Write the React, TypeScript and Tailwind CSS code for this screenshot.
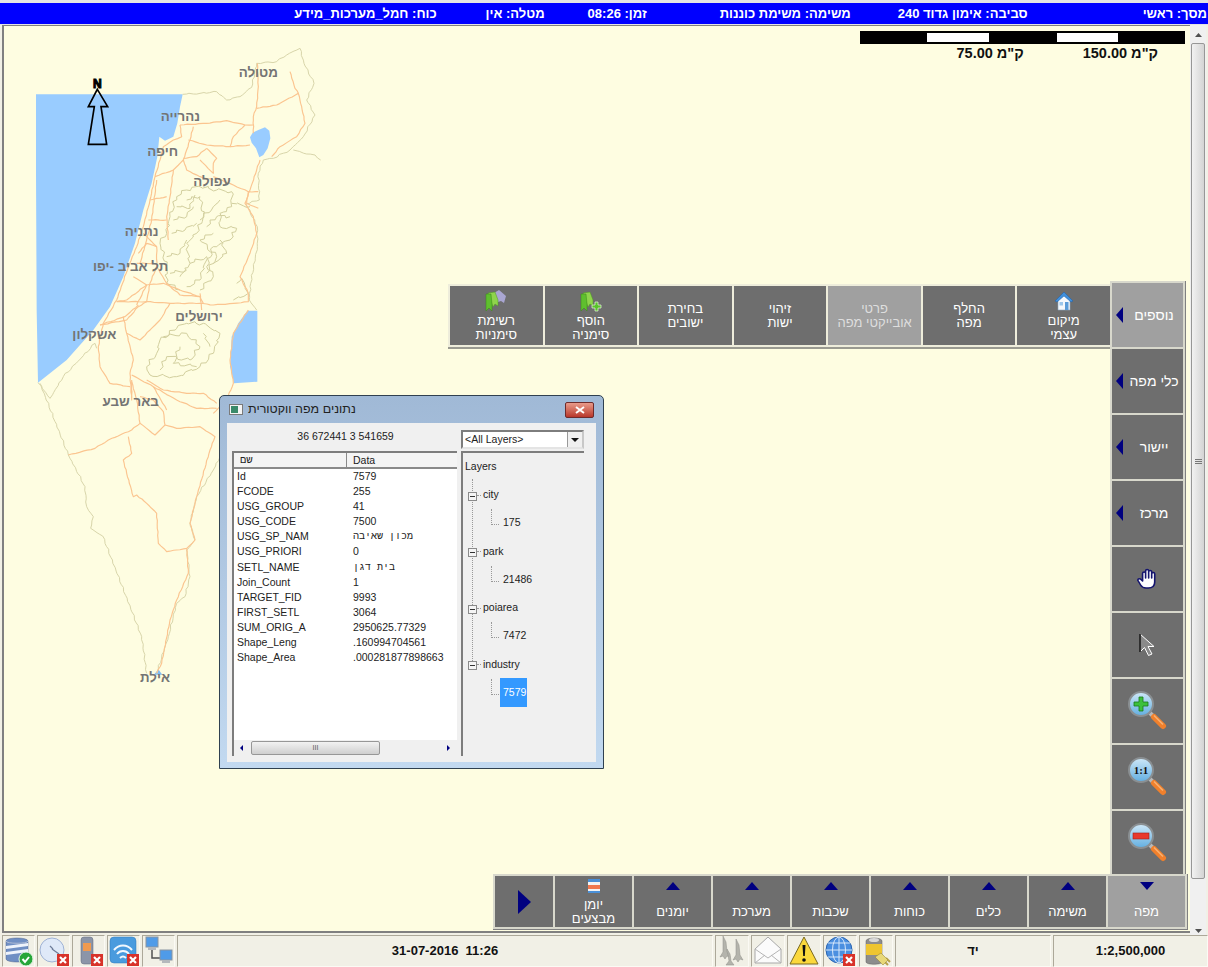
import React from "react";

type Pts = number[][];

// map geometry is in 3x page coordinates, the svg below scales it back down
const sea: Pts = [[108,283],[548,283],[540,320],[532,370],[520,410],[495,422],[478,410],[472,470],[455,550],[430,630],[405,730],[370,830],[330,920],[280,990],[200,1080],[114,1148],[110,930],[108,520]];
const deadSea: Pts = [[742,932],[772,932],[772,1145],[702,1150],[690,1100],[695,1010],[715,970]];
const kinneret: Pts = [[750,412],[758,398],[775,390],[795,382],[808,392],[811,415],[803,445],[790,465],[778,472],[768,445],[755,428]];
const eilat: Pts = [[475,2008],[487,2024],[462,2024]];

const roads: Pts[] = [
  [[540,375],[620,370],[680,362],[735,375],[760,375]],
  [[772,190],[775,260],[770,320],[760,350],[760,400]],
  [[770,325],[830,315],[895,280],[905,320],[915,370],[890,410],[840,440],[815,470]],
  [[870,215],[885,265],[895,280]],
  [[540,375],[545,410],[520,420],[490,440],[480,480],[465,530],[450,600],[430,680],[410,740],[385,800],[350,900],[310,970],[295,1040],[300,1100],[330,1150],[390,1160]],
  [[580,380],[570,420],[550,480],[560,510],[600,530],[640,540]],
  [[735,375],[700,410],[690,440],[620,435],[565,420]],
  [[690,440],[750,435]],
  [[620,445],[590,470],[550,475]],
  [[620,445],[650,475],[640,490],[640,520],[600,480]],
  [[780,480],[770,510],[750,570],[735,610],[760,650],[770,700],[750,760],[720,830],[745,880],[745,905],[700,910],[640,915],[600,910],[510,910],[440,905],[350,905]],
  [[640,530],[700,555],[745,575],[775,575]],
  [[465,530],[520,510],[550,480]],
  [[520,510],[510,590],[500,650],[505,720]],
  [[450,600],[500,590]],
  [[445,660],[500,660]],
  [[470,540],[455,660],[440,720],[420,790]],
  [[430,700],[470,740],[470,800],[450,850],[440,905],[415,920],[380,960],[300,975]],
  [[400,830],[440,855],[490,850],[540,870],[600,890],[610,910]],
  [[410,790],[460,790]],
  [[440,855],[380,900],[350,905]],
  [[300,975],[375,950],[415,915]],
  [[470,740],[440,730],[415,760]],
  [[470,800],[500,850],[540,885],[600,890]],
  [[440,855],[410,915]],
  [[745,575],[740,610],[775,625]],
  [[510,910],[480,960],[420,1020],[380,1000],[370,950]],
  [[380,1000],[400,1080],[390,1120],[395,1200],[395,1140]],
  [[600,880],[605,930]],
  [[745,930],[700,1000],[690,1080],[700,1150],[680,1200],[640,1240]],
  [[395,1125],[460,1160],[530,1200],[590,1225],[650,1225]],
  [[395,1145],[410,1200],[420,1270],[395,1290],[325,1320],[285,1345],[205,1365]],
  [[420,1270],[465,1305],[495,1275],[490,1235],[460,1200],[420,1190]],
  [[440,1140],[490,1170],[560,1180],[610,1180],[650,1210]],
  [[460,1160],[500,1230]],
  [[495,1275],[530,1285],[600,1280],[645,1310],[630,1350],[590,1490],[570,1570],[585,1620],[560,1645],[500,1655],[475,1630],[470,1540],[440,1510],[410,1485],[400,1490],[380,1420],[370,1380],[395,1360],[385,1310]],
  [[560,1645],[565,1720],[530,1800],[510,1860],[485,1990],[470,2020]],
];

const borders: Pts[] = [
  [[548,283],[600,280],[650,275],[680,300],[720,290],[755,262],[770,190],[830,185],[860,165],[900,145],[912,190],[942,250],[920,300],[945,345],[910,410],[870,450],[820,475],[790,480]],
  [[880,450],[920,462],[945,465],[962,480]],
  [[790,480],[775,520],[778,600],[738,612],[772,680],[772,740],[752,850],[748,900],[770,930]],
  [[114,1148],[150,1195],[190,1130],[285,1030],[290,1045]],
  [[120,1150],[205,1365],[255,1460],[260,1520],[280,1550],[272,1585],[308,1608],[425,1910],[440,2020]],
  [[470,2020],[505,1910],[530,1810],[555,1790],[570,1730],[560,1650],[585,1620],[570,1570],[590,1490],[640,1410],[660,1370]],
];

const westBank: Pts[] = [
  [[530,590],[560,570],[600,560],[650,570],[695,575],[695,620],[660,640],[660,680],[710,685],[690,720],[640,740],[620,800],[640,830],[600,870]],
  [[530,590],[510,650],[500,700],[480,730],[500,800],[500,850],[540,870]],
  [[560,600],[600,590],[610,650],[590,700],[560,730],[570,790],[540,830]],
  [[520,660],[560,650],[580,620]],
  [[600,660],[640,620],[660,600]],
  [[640,700],[600,720],[650,770],[620,820]],
  [[500,770],[540,760],[560,720]],
  [[515,700],[555,690],[590,670]],
  [[620,680],[650,650],[690,650]],
  [[530,620],[570,625],[585,585]],
  [[570,790],[620,770],[600,840],[560,860]],
  [[510,820],[560,810]],
  [[660,720],[680,760],[640,790]],
  [[695,610],[750,620]],
  [[710,850],[725,835],[745,880],[700,900]],
  [[530,985],[480,1020],[470,1060],[440,1100],[450,1125],[530,1130],[600,1100],[640,1060],[660,1000],[610,970],[560,970],[530,985]],
  [[490,1010],[560,1000],[600,1040],[570,1080],[500,1070],[480,1110]],
  [[540,1040],[520,1090],[590,1100]],
  [[610,1000],[630,1040]],
];

const toPoints = (pts: Pts) => pts.map((p) => p.join(",")).join(" ");

// breaks a line up into small jitters so it reads like a surveyed border
function wiggle(pts: Pts, amp: number) {
  let d = `M${pts[0][0]} ${pts[0][1]}`;
  let k = 1;
  for (let i = 1; i < pts.length; i++) {
    const [x0, y0] = pts[i - 1];
    const [x1, y1] = pts[i];
    const n = Math.max(1, Math.round(Math.hypot(x1 - x0, y1 - y0) / 11));
    for (let j = 1; j <= n; j++) {
      const t = j / n;
      const off = j === n ? 0 : amp;
      const x = x0 + (x1 - x0) * t + Math.sin(k * 2.3) * off;
      const y = y0 + (y1 - y0) * t + Math.cos(k * 1.7) * off;
      d += ` L${x.toFixed(1)} ${y.toFixed(1)}`;
      k++;
    }
  }
  return d;
}

const cities = [
  { name: "מטולה", x: 775, y: 232 },
  { name: "נהרייה", x: 541, y: 362 },
  { name: "חיפה", x: 488, y: 467 },
  { name: "עפולה", x: 636, y: 557 },
  { name: "נתניה", x: 425, y: 707 },
  { name: "תל אביב -יפו", x: 392, y: 814 },
  { name: "ירושלים", x: 597, y: 962 },
  { name: "אשקלון", x: 283, y: 1017 },
  { name: "באר שבע", x: 392, y: 1219 },
  { name: "אילת", x: 465, y: 2045 },
];

function MapLayer() {
  return (
    <svg viewBox="0 0 1200 2100" className="absolute left-[-4px] top-[-26px] w-[400px] h-[700px]">
      <polygon points={toPoints(sea)} fill="#99ccff" />
      <polygon points={toPoints(deadSea)} fill="#99ccff" />
      <polygon points={toPoints(kinneret)} fill="#99ccff" />
      <polygon points={toPoints(eilat)} fill="#7fbcf5" />
      <g fill="none" stroke="#d8d5aa" strokeWidth="3" strokeLinejoin="round">
        {borders.map((b, i) => (
          <path key={i} d={wiggle(b, 2)} />
        ))}
        {westBank.map((b, i) => (
          <path key={i} d={wiggle(b, 5)} stroke="#d2cf9e" />
        ))}
      </g>
      <g fill="none" stroke="#fbc590" strokeWidth="3.500" strokeLinejoin="round">
        {roads.map((r, i) => (
          <path key={i} d={wiggle(r, 1)} />
        ))}
      </g>
      <g fill="#747474" fontWeight="700" fontSize="40" textAnchor="middle" fontFamily="'Liberation Sans', sans-serif">
        {cities.map((c) => (
          <text key={c.name} x={c.x} y={c.y} direction="rtl">
            {c.name}
          </text>
        ))}
      </g>
      <polygon
        points="292,268 323,320 303,320 320,433 265,433 283,320 265,320"
        fill="none"
        stroke="#000"
        strokeWidth="5"
      />
      <text x="292" y="263" textAnchor="middle" fontSize="36" fontWeight="700" stroke="#000" strokeWidth="3" fontFamily="'Liberation Sans', sans-serif">
        N
      </text>
    </svg>
  );
}

function Triangle({ dir, className }: { dir: "up" | "down" | "left" | "right"; className: string }) {
  const pts = {
    up: "5,0 10,8 0,8",
    down: "0,0 10,0 5,8",
    left: "8,0 8,10 0,5",
    right: "0,0 8,5 0,10",
  }[dir];
  const box = dir === "up" || dir === "down" ? "0 0 10 8" : "0 0 8 10";
  return (
    <svg viewBox={box} preserveAspectRatio="none" className={className}>
      <polygon points={pts} fill="#000080" />
    </svg>
  );
}

function HouseIcon() {
  return (
    <svg viewBox="0 0 20 20" className="w-[20px] h-[20px]">
      <path d="M4 9v10h12V9L10 4z" fill="#f4f8fc" stroke="#8aa4c0" strokeWidth=".6" />
      <rect x="11" y="11" width="3.500" height="8" fill="#5a9bd8" />
      <rect x="5.500" y="11" width="3.500" height="3.500" fill="#9cc6ea" />
      <path d="M1 10 10 1l9 9-2 1-7-6-7 6z" fill="#3f8fdc" stroke="#1f5fa8" strokeWidth=".5" />
    </svg>
  );
}

function BookmarkIcon({ plus }: { plus?: boolean }) {
  return (
    <svg viewBox="0 0 24 22" className="w-[24px] h-[22px]">
      {!plus && <path d="M10 3l5-3 7 6-2 7-3-2-3 1z" fill="#a9a6d2" />}
      <path d="M4 3l7-1 3 8v6l-3-2-2 3z" fill="#8fd44c" stroke="#4f9a22" strokeWidth=".5" />
      <path d="M2 4l5 0 1 10v7l-3-3-3 3z" fill="#5fbf2e" stroke="#3a8a18" strokeWidth=".5" />
      {plus && <path d="M13 15h3v-3h3v3h3v3h-3v3h-3v-3h-3z" fill="#59c22c" stroke="#e8f8d8" strokeWidth=".7" />}
    </svg>
  );
}

function Magnifier({ children }: { children: React.ReactNode }) {
  return (
    <svg viewBox="0 0 40 40" className="w-[40px] h-[40px] mb-[2px] mr-[1px]">
      <defs>
        <linearGradient id="glass" x1="0" y1="0" x2="0" y2="1">
          <stop offset="0" stopColor="#cfe8f8" />
          <stop offset="1" stopColor="#62aee0" />
        </linearGradient>
      </defs>
      <path d="M23 23l4 4" stroke="#b8b8b8" strokeWidth="4" />
      <path d="M27 27l9 9" stroke="#f0802c" strokeWidth="6" strokeLinecap="round" />
      <path d="M27 25.500l9 9" stroke="#f9b070" strokeWidth="1.500" />
      <circle cx="14" cy="14" r="12" fill="url(#glass)" stroke="#8a8f92" strokeWidth="2" />
      {children}
    </svg>
  );
}

function XBadge({ x = 18, y = 18 }: { x?: number; y?: number }) {
  return (
    <g transform={`translate(${x} ${y})`}>
      <rect width="12" height="12" fill="#d8322a" />
      <path d="M3 3l6 6M9 3l-6 6" stroke="#fff" strokeWidth="2.200" />
    </g>
  );
}

const iconClass = "w-[30px] h-[30px]";

const statusLeftIcons = [
  <svg viewBox="0 0 30 30" className={iconClass} key="db">
    <path d="M2 5c0-4 22-4 22 0v18c0 4-22 4-22 0z" fill="#6f8fc4" stroke="#51648c" strokeWidth=".5" />
    <path d="M2 10l22-3v3L2 13zM2 16l22-3v3L2 19z" fill="#eef3fb" />
    <path d="M2 5c0 3 22 3 22 0" fill="none" stroke="#b0bcd4" />
    <circle cx="22" cy="23" r="7" fill="#27a63a" stroke="#e8f4e8" />
    <path d="M18.500 23l2.500 3 4-5" fill="none" stroke="#fff" strokeWidth="2" />
  </svg>,
  <svg viewBox="0 0 30 30" className={iconClass} key="dish">
    <circle cx="13" cy="14" r="12" fill="#dfe9f8" stroke="#9fb2d4" />
    <path d="M13 13l7 5M11 10l3 3" stroke="#6d7c99" strokeWidth="1.200" />
    <XBadge />
  </svg>,
  <svg viewBox="0 0 30 30" className={iconClass} key="phone">
    <rect x="7" y="1" width="12" height="27" rx="3" fill="#8c95a8" stroke="#5e6678" strokeWidth=".5" />
    <rect x="9" y="7" width="8" height="8" fill="#f09a50" />
    <XBadge x={17} />
  </svg>,
  <svg viewBox="0 0 30 30" className={iconClass} key="wifi">
    <rect x="1" y="1" width="26" height="26" rx="4" fill="#4a9bde" stroke="#2e78ba" strokeWidth=".5" />
    <path d="M5 14c5-6 13-6 18 0M8 18c3-4 9-4 12 0M11 22c2-2 4-2 6 0" fill="none" stroke="#f2f8fe" strokeWidth="2" />
    <XBadge />
  </svg>,
  <svg viewBox="0 0 30 30" className={iconClass} key="network">
    <path d="M8 14v8h10" fill="none" stroke="#505050" strokeWidth="1.500" />
    <rect x="2" y="1" width="12" height="10" fill="#4f9be8" stroke="#8a94a0" />
    <rect x="4" y="11" width="8" height="3" fill="#b4b8bc" />
    <rect x="16" y="14" width="12" height="10" fill="#4f9be8" stroke="#8a94a0" />
    <rect x="18" y="24" width="8" height="3" fill="#b4b8bc" />
  </svg>,
];

const statusRightIcons = [
  <svg viewBox="0 0 30 30" className={iconClass} key="jets">
    <g fill="#b4b4ac" stroke="#8f8f88" strokeWidth=".5">
      <path d="M6 0l3 6 1 10 3 5-3-1-2 3-2-3-3 1 3-5z" />
      <path d="M19 3l3 6 1 10 3 5-3-1-2 3-2-3-3 1 3-5z" />
      <path d="M10 13l3 5 1 7 3 4-8 0 3-4z" />
    </g>
  </svg>,
  <svg viewBox="0 0 30 30" className={iconClass} key="mail">
    <path d="M2 13L15 1l13 12v14H2z" fill="#fbfbfb" stroke="#a8a8a8" />
    <path d="M2 13l13 9 13-9M2 27l10-8M28 27l-10-8" fill="none" stroke="#b4b4b4" />
  </svg>,
  <svg viewBox="0 0 30 30" className={iconClass} key="warning">
    <path d="M15 1L29 28H1z" fill="#fbd83c" stroke="#7a6a20" strokeLinejoin="round" />
    <path d="M13.500 9h3l-.7 11h-1.600z" fill="#111" />
    <circle cx="15" cy="24" r="1.800" fill="#111" />
  </svg>,
  <svg viewBox="0 0 30 30" className={iconClass} key="globe">
    <circle cx="14" cy="14" r="13" fill="#4b8fe0" stroke="#2a64b0" />
    <path d="M1 14h26M3 7h22M3 21h22M14 1v26" stroke="#d8e8fa" fill="none" />
    <ellipse cx="14" cy="14" rx="6.500" ry="13" fill="none" stroke="#d8e8fa" />
    <XBadge />
  </svg>,
  <svg viewBox="0 0 30 30" className={iconClass} key="battery">
    <path d="M5 5c0-4 16-4 16 0v21c0 3-16 3-16 0z" fill="#8d8d8d" stroke="#5c5c5c" strokeWidth=".5" />
    <rect x="5" y="8" width="16" height="11" fill="#eec530" />
    <ellipse cx="13" cy="4" rx="5" ry="2" fill="#d8d8d8" />
    <path d="M22 24l5 5M25 22l4 4" stroke="#b9a24a" strokeWidth="2" />
    <path d="M14 21l6-4 7 7-5 5z" fill="#e8d878" stroke="#8a7a2a" strokeWidth=".5" />
  </svg>,
];

const topButtons = [
  { lines: ["רשימת", "סימניות"], icon: <BookmarkIcon /> },
  { lines: ["הוסף", "סימניה"], icon: <BookmarkIcon plus /> },
  { lines: ["בחירת", "ישובים"] },
  { lines: ["זיהוי", "ישות"] },
  { lines: ["פרטי", "אובייקטי מפה"], active: true },
  { lines: ["החלף", "מפה"] },
  { lines: ["מיקום", "עצמי"], icon: <HouseIcon /> },
];

function TopToolbar() {
  return (
    <div className="absolute left-[444px] top-[258px] w-[664px] p-[2px] bg-[#eeeddb] border-b-2 border-b-[#9a9a90]">
      <div className="grid grid-cols-7 gap-[2px]">
        {topButtons.map((b) => (
          <div
            key={b.lines.join()}
            className={`h-[59px] flex flex-col items-center text-[13px] leading-[14px] pt-[1px] ${b.icon ? "justify-start" : "justify-center"} ${
              b.active ? "bg-[#a0a0a0] text-[#dedede]" : "bg-[#6e6e6e] text-white"
            }`}
          >
            {b.icon && <div className="h-[27px] flex items-center">{b.icon}</div>}
            {b.lines.map((l) => (
              <div key={l}>{l}</div>
            ))}
          </div>
        ))}
      </div>
    </div>
  );
}

const sideLabels = [
  { label: "נוספים", active: true },
  { label: "כלי מפה" },
  { label: "יישור" },
  { label: "מרכז" },
];

function SideToolbar() {
  const tool = "h-[64px] bg-[#6e6e6e] flex items-center justify-center";
  return (
    <div className="absolute right-[4px] top-[255px] w-[76px] p-[2px] bg-[#d8d8cc] border-r border-[#808080] flex flex-col gap-[2px]">
      {sideLabels.map((s) => (
        <div key={s.label} className={`h-[64px] flex items-center pl-[4px] text-[14px] text-white ${s.active ? "bg-[#a0a0a0]" : "bg-[#6e6e6e]"}`}>
          <Triangle dir="left" className="w-[7px] h-[16px] shrink-0" />
          <div className="flex-1 text-center whitespace-nowrap pl-[2px]">{s.label}</div>
        </div>
      ))}
      <div className={tool}>
        <svg viewBox="0 0 24 24" preserveAspectRatio="none" className="w-[26px] h-[24px]">
          <path
            d="M3 14c-1-1 0-3 2-2l2 2V6.500a1.400 1.400 0 0 1 2.800 0V11V4a1.400 1.400 0 0 1 2.800 0v7V4.800a1.400 1.400 0 0 1 2.800 0V11V7a1.400 1.400 0 0 1 2.800 0v8c0 4-2 6-6 6h-2c-3 0-4-1-5-3z"
            fill="#fff"
            stroke="#14146e"
            strokeWidth="1.500"
            strokeLinejoin="round"
          />
        </svg>
      </div>
      <div className={tool}>
        <svg viewBox="0 0 17 24" className="w-[17px] h-[24px] mr-[1px]">
          <path d="M1 1v18l4.500-4.500 4 8 3.500-1.500-4-7.500H15z" fill="#8a8a8a" stroke="#fff" strokeWidth="1" />
          <path d="M1 1v18" stroke="#000" strokeWidth="1.500" />
        </svg>
      </div>
      <div className={tool}>
        <Magnifier>
          <path d="M12 7h4v5h5v4h-5v5h-4v-5H7v-4h5z" fill="#3cc03c" stroke="#1a7a1a" strokeWidth=".8" />
        </Magnifier>
      </div>
      <div className={tool}>
        <Magnifier>
          <text x="14" y="18" textAnchor="middle" fontSize="11" fontWeight="700" fill="#111" fontFamily="'Liberation Serif', serif">
            1:1
          </text>
        </Magnifier>
      </div>
      <div className={`${tool} h-[60px]`}>
        <Magnifier>
          <rect x="6" y="11" width="16" height="6" fill="#e8382c" stroke="#a02018" strokeWidth=".6" />
        </Magnifier>
      </div>
    </div>
  );
}

const bottomButtons = ["יומנים", "מערכת", "שכבות", "כוחות", "כלים", "משימה"];

function BottomToolbar() {
  return (
    <div className="absolute right-[2px] bottom-[1px] h-[56px] p-[2px] bg-[#d8d8cc] border-r border-b border-[#808080] flex gap-[2px]">
      <div className="w-[58px] bg-[#6e6e6e] flex items-center justify-center">
        <Triangle dir="right" className="w-[13px] h-[24px]" />
      </div>
      <div className="w-[77px] bg-[#6e6e6e] flex flex-col items-center text-white text-[13px] leading-[14px] pt-[3px]">
        <svg viewBox="0 0 12 14" className="w-[12px] h-[14px] mb-[5px]">
          <rect width="12" height="14" fill="#4a90d8" />
          <rect y="3" width="12" height="3" fill="#f4f4f4" />
          <rect y="6" width="12" height="4" fill="#f07850" />
          <rect y="10" width="12" height="2" fill="#f4f4f4" />
        </svg>
        <div>יומן</div>
        <div>מבצעים</div>
      </div>
      {bottomButtons.map((b) => (
        <div key={b} className="w-[77px] bg-[#6e6e6e] flex flex-col items-center text-white text-[13px] pt-[6px]">
          <Triangle dir="up" className="w-[14px] h-[8px] mb-[15px]" />
          <div className="leading-[14px]">{b}</div>
        </div>
      ))}
      <div className="w-[77px] bg-[#a0a0a0] flex flex-col items-center text-white text-[13px] pt-[6px]">
        <Triangle dir="down" className="w-[14px] h-[8px] mb-[15px]" />
        <div className="leading-[14px]">מפה</div>
      </div>
    </div>
  );
}

const rows = [
  ["Id", "7579"],
  ["FCODE", "255"],
  ["USG_GROUP", "41"],
  ["USG_CODE", "7500"],
  ["USG_SP_NAM", "מכון שאיבה", "he"],
  ["USG_PRIORI", "0"],
  ["SETL_NAME", "בית דגן", "he"],
  ["Join_Count", "1"],
  ["TARGET_FID", "9993"],
  ["FIRST_SETL", "3064"],
  ["SUM_ORIG_A", "2950625.77329"],
  ["Shape_Leng", ".160994704561"],
  ["Shape_Area", ".000281877898663"],
];

const layers = [
  { name: "city", id: "175" },
  { name: "park", id: "21486" },
  { name: "poiarea", id: "7472" },
  { name: "industry", id: "7579", selected: true },
];

function LayerTree() {
  return (
    <div className="relative flex-1 border-t-2 border-l-2 border-[#7d7d7d] bg-[#f0f0f0] pl-[2px]">
      <div className="pt-[6px] h-[27px] leading-[14px]">Layers</div>
      <div className="absolute left-[9px] top-[26px] h-[186px] border-l border-dotted border-[#999]" />
      {layers.map((l) => (
        <div key={l.name} className="relative h-[56.500px] pt-[8px]">
          <div className="flex items-center h-[14px] pl-[3px]">
            <div className="relative w-[9px] h-[9px] border border-[#8a8a8a] bg-[#f4f4f4] mt-[2px]">
              <div className="absolute left-[1px] right-[1px] top-[3px] h-px bg-[#333]" />
            </div>
            <div className="w-[4px] border-t border-dotted border-[#999] mr-[2px]" />
            <div>{l.name}</div>
          </div>
          <div className="absolute left-[26px] top-[29px] w-[8px] h-[16px] border-l border-b border-dotted border-[#999]" />
          <div
            className={`absolute left-[35px] flex items-center px-[3px] ${
              l.selected ? "top-[28.500px] h-[29px] w-[27px] bg-[#3399ff] text-white" : "top-[35.500px] h-[15px]"
            }`}
          >
            {l.id}
          </div>
        </div>
      ))}
    </div>
  );
}

function DataDialog() {
  return (
    <div className="absolute left-[215px] top-[369px] w-[385px] h-[374px] rounded-t-[5px] border border-[#2f4050] bg-gradient-to-b from-[#a0b9d6] to-[#c2d9f0] px-[7px] pb-[6px] flex flex-col">
      <div className="h-[27px] flex items-center shrink-0">
        <svg viewBox="0 0 14 11" className="w-[14px] h-[11px] ml-[2px] mr-[5px]">
          <rect x=".5" y=".5" width="13" height="10" fill="#f4f4f4" stroke="#7a7a7a" />
          <rect x="2" y="2" width="7" height="7" fill="#3a8a6a" />
        </svg>
        <div dir="rtl" className="text-[12.500px] text-[#222]">
          נתונים מפה ווקטורית
        </div>
        <div className="ml-auto mr-[2px] w-[29px] h-[16px] rounded-[2px] border border-[#6e2b2b] bg-gradient-to-b from-[#e89a8a] to-[#b8352a] flex items-center justify-center">
          <svg viewBox="0 0 10 8" className="w-[10px] h-[8px]">
            <path d="M1 1l8 6M9 1L1 7" stroke="#fff" strokeWidth="2" />
          </svg>
        </div>
      </div>
      <div className="flex-1 bg-[#f0f0f0] flex text-[10.500px] text-[#222] pl-[5px] pr-[12px] pb-[6px] min-h-0">
        <div className="w-[225px] flex flex-col mr-[4px]">
          <div className="h-[28px] flex items-center justify-center shrink-0 pl-[2px]">36 672441 3 541659</div>
          <div className="flex-1 border-t-2 border-l-2 border-[#7d7d7d] bg-white flex flex-col min-h-0">
            <div className="h-[16px] flex bg-[#f4f4f4] border-b-2 border-[#8a8a8a] shrink-0 leading-[14px]">
              <div className="w-[113px] pl-[6px] border-r border-[#8a8a8a] font-['Liberation_Mono',monospace]">שם</div>
              <div className="pl-[6px]">Data</div>
            </div>
            <div className="flex-1">
              {rows.map(([k, v, lang]) => (
                <div key={k} className="h-[15.080px] flex items-center leading-[15px]">
                  <div className="w-[119px] pl-[3px]">{k}</div>
                  <div className={lang ? "font-['Liberation_Mono',monospace] text-[10px]" : ""}>{v}</div>
                </div>
              ))}
            </div>
            <div className="h-[16px] bg-[#f0f0f0] flex items-center shrink-0 relative">
              <Triangle dir="left" className="absolute left-[6px] w-[3px] h-[6px]" />
              <div className="absolute left-[17px] w-[129px] h-[14px] rounded-[2px] border border-[#979797] bg-gradient-to-b from-[#f2f2f2] to-[#cfcfcf] text-center text-[7px] leading-[12px] text-[#555]">
                III
              </div>
              <Triangle dir="right" className="absolute right-[7px] w-[3px] h-[6px]" />
            </div>
          </div>
        </div>
        <div className="flex-1 flex flex-col pt-[7px]">
          <div className="h-[19px] mb-[2px] bg-white border-2 border-t-[#7d7d7d] border-l-[#7d7d7d] border-r-[#c8c8c8] border-b-[#e4e4e4] flex items-center pl-[2px] shrink-0">
            <div className="flex-1">&lt;All Layers&gt;</div>
            <div className="w-[15px] h-[15px] bg-[#f0f0f0] border-l border-[#999] flex items-center justify-center">
              <svg viewBox="0 0 8 4" className="w-[8px] h-[4px]">
                <polygon points="0,0 8,0 4,4" fill="#111" />
              </svg>
            </div>
          </div>
          <LayerTree />
        </div>
      </div>
    </div>
  );
}

function Scrollbar() {
  return (
    <div className="w-[16px] flex flex-col items-stretch bg-[#f0f0f0] pt-[3px]">
      <div className="h-[14px] flex items-center justify-center shrink-0">
        <svg viewBox="0 0 7 4" className="w-[7px] h-[4px]">
          <polygon points="3.500,0 7,4 0,4" fill="#505050" />
        </svg>
      </div>
      <div className="h-[836px] shrink-0 flex items-center justify-center rounded-[2px] border border-[#979797] bg-gradient-to-r from-[#f2f2f2] to-[#d4d4d4] mx-[1px] mt-[1px]">
        <div className="w-[7px] h-[5px] border-y border-[#777] flex items-center">
          <div className="w-full h-px bg-[#777]" />
        </div>
      </div>
      <div className="flex-1" />
      <div className="h-[8px] flex items-center justify-center shrink-0">
        <svg viewBox="0 0 7 4" className="w-[7px] h-[4px]">
          <polygon points="0,0 7,0 3.500,4" fill="#505050" />
        </svg>
      </div>
    </div>
  );
}

function StatusCell({ children, className }: { children: React.ReactNode; className: string }) {
  return (
    <div className={`border border-t-[#aca899] border-l-[#aca899] border-r-[#fbfaf4] border-b-[#fbfaf4] flex items-center justify-center overflow-hidden ${className}`}>
      {children}
    </div>
  );
}

export default function App() {
  return (
    <div className="w-[1208px] h-[967px] flex flex-col overflow-hidden bg-[#f1f0e6] font-['Liberation_Sans',sans-serif]">
      <div className="h-[25px] pt-[3px] bg-[#e4e4e4] shrink-0">
        <div dir="rtl" className="h-[21px] bg-[#0000ff] text-white text-[13px] font-bold flex items-center pr-[1px] whitespace-nowrap">
          <div>מסך: ראשי</div>
          <div className="mr-[115px]">סביבה: אימון גדוד 240</div>
          <div className="mr-[47px]">משימה: משימת כוננות</div>
          <div className="mr-[73px]">זמן: 08:26</div>
          <div className="mr-[43px]">מטלה: אין</div>
          <div className="mr-[49px]">כוח: חמל_מערכות_מידע</div>
        </div>
      </div>

      <div className="flex-1 flex pl-[2px] pr-[2px] min-h-0">
        <div className="relative flex-1 mb-[2px] bg-[#fefde1] border-l-2 border-t border-b-2 border-[#808080] overflow-hidden">
          <MapLayer />
          <div className="absolute left-[856px] top-[5px] w-[325px]">
            <div className="h-[13px] bg-black py-[2px] flex">
              <div className="ml-[67px] w-[62px] bg-white" />
              <div className="ml-[68px] w-[61px] bg-white" />
            </div>
            <div dir="rtl" className="h-[17px] flex text-[14.500px] font-bold text-[#111] leading-[17px] pt-[1px] whitespace-nowrap">
              <div className="mr-[27px]">ק"מ 150.00</div>
              <div className="mr-[59px]">ק"מ 75.00</div>
            </div>
          </div>
          <TopToolbar />
          <SideToolbar />
          <BottomToolbar />
          <DataDialog />
        </div>
        <Scrollbar />
      </div>

      <div className="h-[32px] shrink-0 flex gap-[2px] pl-[2px] text-[13px] font-bold text-[#111]">
        {statusLeftIcons.map((icon, i) => (
          <StatusCell key={i} className="w-[33px]">
            {icon}
          </StatusCell>
        ))}
        <StatusCell className="flex-1">
          <span className="whitespace-pre">31-07-2016  11:26</span>
        </StatusCell>
        {statusRightIcons.map((icon, i) => (
          <StatusCell key={i} className="w-[34px]">
            {icon}
          </StatusCell>
        ))}
        <StatusCell className="w-[156px]">יד</StatusCell>
        <StatusCell className="w-[155px]">1:2,500,000</StatusCell>
      </div>
    </div>
  );
}
